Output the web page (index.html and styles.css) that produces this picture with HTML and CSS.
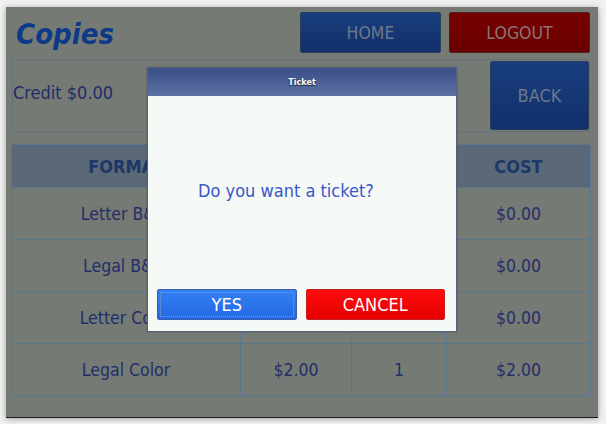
FILE: index.html
```html
<!DOCTYPE html>
<html>
<head>
<meta charset="utf-8">
<link rel="stylesheet" href="styles.css">
</head>
<body>
<div class="window">
  <div class="topbar">
    <h1 class="title">Copies</h1>
    <div class="navbtns">
      <div class="btn btn-blue nav">HOME</div>
      <div class="btn btn-red nav">LOGOUT</div>
    </div>
  </div>
  <div class="panel">
    <div class="credit">Credit $0.00</div>
    <div class="btn btn-blue back">BACK</div>
  </div>
  <table class="grid">
    <colgroup><col class="c1"><col class="c2"><col class="c3"><col class="c4"></colgroup>
    <tr class="head"><th>FORMAT</th><th>PRICE</th><th>QTY</th><th>COST</th></tr>
    <tr><td>Letter B&amp;W</td><td>$0.10</td><td>0</td><td>$0.00</td></tr>
    <tr><td>Legal B&amp;W</td><td>$0.15</td><td>0</td><td>$0.00</td></tr>
    <tr><td>Letter Color</td><td>$1.00</td><td>0</td><td>$0.00</td></tr>
    <tr><td>Legal Color</td><td>$2.00</td><td>1</td><td>$2.00</td></tr>
  </table>

  <div class="dialog">
    <div class="dlg-title">Ticket</div>
    <div class="dlg-body">
      <div class="dlg-msg">Do you want a ticket?</div>
      <div class="dlg-btns">
        <div class="dbtn yes"><span class="focus">YES</span></div>
        <div class="dbtn cancel">CANCEL</div>
      </div>
    </div>
  </div>
</div>
</body>
</html>
```

FILE: styles.css
```css
html, body {
  margin: 0;
  padding: 0;
}
body {
  width: 606px;
  height: 424px;
  background: #f1f1f1;
  font-family: "DejaVu Sans Condensed", "DejaVu Sans", sans-serif;
  font-stretch: condensed;
  overflow: hidden;
}
.window {
  position: relative;
  box-sizing: border-box;
  margin: 7px 0 0 6px;
  width: 592px;
  height: 411px;
  background: #767a75;
  border-bottom: 1px solid #1c1c1c;
  box-shadow: 0 1px 6px rgba(0,0,0,0.35);
  padding: 5px 8px 0 5px;
  display: flex;
  flex-direction: column;
}
.topbar {
  display: flex;
  justify-content: space-between;
  align-items: flex-start;
  height: 41px;
}
.title {
  margin: 0;
  padding: 5px 0 0 5px;
  font-size: 29px;
  font-weight: bold;
  font-style: italic;
  color: #0d3a88;
  line-height: 34px;
}
.navbtns {
  display: flex;
  gap: 8px;
}
.btn {
  box-sizing: border-box;
  display: flex;
  align-items: center;
  justify-content: center;
  border-radius: 2px;
  font-size: 17.5px;
}
.btn-blue {
  background: linear-gradient(#193d7c, #11306c);
  border: 1px solid #2a3e5e;
  color: #6b788a;
}
.btn-red {
  background: linear-gradient(#760000, #6a0000);
  border: 1px solid #4e2020;
  color: #887474;
}
.nav {
  width: 141px;
  height: 41px;
}
.panel {
  box-sizing: border-box;
  margin: 6px 0 0 1px;
  height: 73px;
  border: 1px solid #65717a;
  padding: 1px 0 1px 0;
  display: flex;
  justify-content: space-between;
  align-items: stretch;
}
.credit {
  align-self: center;
  font-size: 18px;
  color: #1f2c68;
  margin-top: -6px;
}
.back {
  width: 99px;
  height: 69px;
  font-size: 18px;
}
.grid {
  margin-top: 12px;
  width: 579px;
  table-layout: fixed;
  border-collapse: collapse;
  border: 1px solid #5a7590;
  color: #222e6a;
  font-size: 17.5px;
  text-align: center;
}
.grid td, .grid th {
  border: 1px solid #5a7590;
  padding: 0;
  white-space: nowrap;
  overflow: hidden;
}
.grid tr { height: 52px; }
.grid tr.head { height: 43px; background: #5a6877; }
.grid th {
  font-weight: bold;
  color: #1d3766;
  font-size: 18px;
}
.c1 { width: 229px; }
.c2 { width: 111px; }
.c3 { width: 95px; }
.c4 { width: 144px; }

.dialog {
  position: absolute;
  left: 141px;
  top: 60px;
  width: 310px;
  height: 265px;
  box-sizing: border-box;
  border: 1px solid #55627e;
  background: #f5faf7;
  display: flex;
  flex-direction: column;
  box-shadow: 0 0 2px rgba(0,0,0,0.25);
}
.dlg-title {
  height: 28px;
  background: linear-gradient(#3a4e88, #5c72a4);
  color: #ffffff;
  font-weight: bold;
  font-size: 9px;
  display: flex;
  align-items: center;
  justify-content: center;
  text-shadow: 0 1px 1px #222, 0 0 1px #222;
}
.dlg-body {
  flex: 1;
  display: flex;
  flex-direction: column;
  padding: 0 11px 11px 9px;
}
.dlg-msg {
  flex: 1;
  display: flex;
  align-items: center;
  justify-content: center;
  color: #3a56c8;
  font-size: 18px;
  padding: 0 30px 5px 0;
}
.dlg-btns {
  display: flex;
  gap: 9px;
}
.dbtn {
  box-sizing: border-box;
  width: 140px;
  height: 31px;
  border-radius: 2px;
  color: #ffffff;
  font-size: 18px;
  display: flex;
  align-items: center;
  justify-content: center;
}
.yes {
  background: linear-gradient(#3380f2, #2468e2);
  border: 1px solid #3a5ea8;
  padding: 2px;
}
.yes .focus {
  flex: 1;
  align-self: stretch;
  display: flex;
  align-items: center;
  justify-content: center;
  border: 1px dotted #8a9ab8;
}
.cancel {
  background: linear-gradient(#ff0d0d, #e60000);
  border: 1px solid #c42020;
}
```
